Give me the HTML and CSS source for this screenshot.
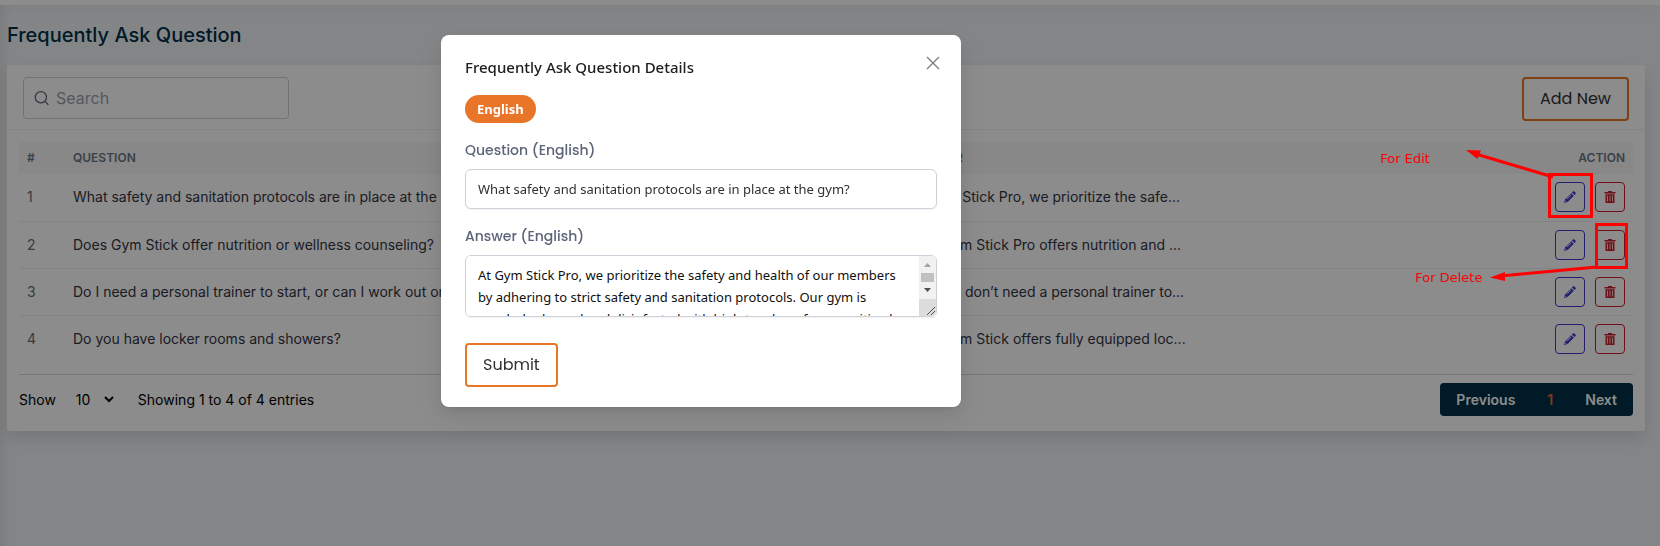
FILE: index.html
```html
<!DOCTYPE html>
<html lang="en">
<head>
  <meta charset="UTF-8">
  <meta name="viewport" content="width=device-width, initial-scale=1.0">
  <title>Frequently Ask Question</title>
  <link rel="stylesheet" href="styles.css">
</head>
<body>
  <!-- shared icons -->
  <svg class="sprite" aria-hidden="true">
    <symbol id="icon-pencil" viewBox="0 0 12 12">
      <path fill-rule="evenodd" d="M8.800.6a1.200 1.200 0 0 1 1.700 0l.9.9a1.200 1.200 0 0 1 0 1.700l-.9.9-2.600-2.600zM7.200 2.200l2.600 2.600L3.600 11 0 12l1-3.600zM6.800 3.600L2.600 7.800l.5.5 4.200-4.200zM1.500 9.400l-.4 1.500 1.500-.4z"/>
    </symbol>
    <symbol id="icon-trash" viewBox="0 0 12 12">
      <path fill-rule="evenodd" d="M4 0h4v1h3.500v1.500H.5V1H4zM1.500 3.200h9V12h-9zM3.200 4.500v6h.8v-6zM5.600 4.500v6h.8v-6zM8 4.500v6h.8v-6z"/>
    </symbol>
  </svg>

  <div class="topbar"></div>

  <main class="page">
    <h1 class="page-title">Frequently Ask Question</h1>

    <section class="card">
      <div class="card-header">
        <label class="search">
          <svg class="search-icon" viewBox="0 0 24 24" aria-hidden="true"><circle cx="11" cy="10" r="9"/><path d="M18 17l5 5"/></svg>
          <input type="search" placeholder="Search" aria-label="Search">
        </label>
        <button type="button" class="btn">Add New</button>
      </div>

      <div class="card-body">
        <table class="faq-table">
          <thead>
            <tr>
              <th class="col-id">#</th>
              <th class="col-question">Question</th>
              <th class="col-answer">Answer</th>
              <th class="col-action">Action</th>
            </tr>
          </thead>
          <tbody>
            <tr>
              <td class="row-id">1</td>
              <td>What safety and sanitation protocols are in place at the gym?</td>
              <td>At Gym Stick Pro, we prioritize the safe...</td>
              <td>
                <div class="actions">
                  <button type="button" class="icon-btn edit" aria-label="Edit"><svg><use href="#icon-pencil"/></svg></button>
                  <button type="button" class="icon-btn delete" aria-label="Delete"><svg><use href="#icon-trash"/></svg></button>
                </div>
              </td>
            </tr>
            <tr>
              <td class="row-id">2</td>
              <td>Does Gym Stick offer nutrition or wellness counseling?</td>
              <td>Yes, Gym Stick Pro offers nutrition and ...</td>
              <td>
                <div class="actions">
                  <button type="button" class="icon-btn edit" aria-label="Edit"><svg><use href="#icon-pencil"/></svg></button>
                  <button type="button" class="icon-btn delete" aria-label="Delete"><svg><use href="#icon-trash"/></svg></button>
                </div>
              </td>
            </tr>
            <tr>
              <td class="row-id">3</td>
              <td>Do I need a personal trainer to start, or can I work out on my own?</td>
              <td>No, you don’t need a personal trainer to...</td>
              <td>
                <div class="actions">
                  <button type="button" class="icon-btn edit" aria-label="Edit"><svg><use href="#icon-pencil"/></svg></button>
                  <button type="button" class="icon-btn delete" aria-label="Delete"><svg><use href="#icon-trash"/></svg></button>
                </div>
              </td>
            </tr>
            <tr>
              <td class="row-id">4</td>
              <td>Do you have locker rooms and showers?</td>
              <td>Yes, Gym Stick offers fully equipped loc...</td>
              <td>
                <div class="actions">
                  <button type="button" class="icon-btn edit" aria-label="Edit"><svg><use href="#icon-pencil"/></svg></button>
                  <button type="button" class="icon-btn delete" aria-label="Delete"><svg><use href="#icon-trash"/></svg></button>
                </div>
              </td>
            </tr>
          </tbody>
        </table>

        <div class="table-footer">
          <label for="page-size">Show</label>
          <span class="page-size">
            <select id="page-size">
              <option>10</option>
              <option>25</option>
              <option>50</option>
            </select>
            <svg viewBox="0 0 10 7" aria-hidden="true"><path d="M1 1l4 4 4-4"/></svg>
          </span>
          <span>Showing 1 to 4 of 4 entries</span>
          <nav class="pagination">
            <a href="#">Previous</a>
            <a href="#" class="current">1</a>
            <a href="#">Next</a>
          </nav>
        </div>
      </div>
    </section>
  </main>

  <div class="backdrop">
    <div class="modal" role="dialog" aria-modal="true" aria-labelledby="modal-title">
      <button type="button" class="modal-close" aria-label="Close">
        <svg viewBox="0 0 14 14"><path d="M1 1l12 12M13 1L1 13"/></svg>
      </button>
      <h2 class="modal-title" id="modal-title">Frequently Ask Question Details</h2>
      <button type="button" class="lang-tab">English</button>
      <form class="modal-form">
        <div class="field">
          <label for="question">Question (English)</label>
          <input type="text" id="question" value="What safety and sanitation protocols are in place at the gym?">
        </div>
        <div class="field">
          <label for="answer">Answer (English)</label>
          <div class="textarea-wrap">
            <textarea id="answer">At Gym Stick Pro, we prioritize the safety and health of our members by adhering to strict safety and sanitation protocols. Our gym is regularly cleaned and disinfected with high-touch surfaces sanitized throughout the day.</textarea>
            <svg class="scrollbar" viewBox="0 0 17 60" aria-hidden="true">
              <path fill="#f1f1f1" d="M0 0h17v60H0z"/>
              <path fill="#a3a3a3" d="M5 11l3.500-4 3.500 4z"/>
              <path fill="#c1c1c1" d="M2 17h13v9H2z"/>
              <path fill="#505050" d="M5 32h7l-3.500 4z"/>
              <path fill="#dcdcdc" d="M0 43h17v17H0z"/>
              <path fill="none" stroke="#505050" d="M8 59l8-8M12 59l4-4"/>
            </svg>
          </div>
        </div>
        <button type="button" class="btn">Submit</button>
      </form>
    </div>
  </div>

  <!-- callouts over the action buttons -->
  <svg class="callouts" width="290" height="300" viewBox="0 0 290 300">
    <text x="10" y="163">For Edit</text>
    <text x="45" y="282">For Delete</text>
    <rect x="179.500" y="174.500" width="42" height="42"/>
    <rect x="226.500" y="224.500" width="30" height="43"/>
    <path class="line" d="M183 177L106 154M227 267L130 276"/>
    <path class="head" d="M96 150l15 .5-3.500 8.500zM120 277.500l15-5.500v9z"/>
  </svg>
</body>
</html>
```
FILE: styles.css
```css
* {
  margin: 0;
  padding: 0;
  box-sizing: border-box;
}

body {
  font-family: Inter, 'Liberation Sans', sans-serif;
  font-size: 14px;
  line-height: 20px;
  color: #000000;
  background: #f1f3f6;
  min-height: 100vh;
}

button,
input,
select,
textarea {
  font: inherit;
  color: inherit;
}

button {
  cursor: pointer;
}

a {
  color: inherit;
  text-decoration: none;
}

.sprite {
  display: none;
}

.topbar {
  height: 5px;
  background: #ffffff;
  box-shadow: 0 4px 16px rgba(0, 0, 0, 0.1);
}

.page {
  min-height: calc(100vh - 5px);
  padding: 16px 15px 16px 7px;
  box-shadow: inset 10px 0 12px -8px rgba(0, 0, 0, 0.1);
}

.page-title {
  color: #003049;
  font-size: 20px;
  font-weight: 500;
  line-height: 28px;
  margin-bottom: 16px;
}

.card {
  background: #ffffff;
  border-radius: 2px;
  box-shadow: 0 8px 16px rgba(40, 50, 70, 0.14);
}

.card-header {
  display: flex;
  align-items: flex-start;
  justify-content: space-between;
  padding: 12px 16px 8px;
  border-bottom: 1px solid #eceef3;
}

.search {
  display: flex;
  align-items: center;
  gap: 7px;
  width: 266px;
  height: 42px;
  padding: 0 10px;
  border: 1px solid #d0d0da;
  border-radius: 4px;
}

.search-icon {
  width: 15px;
  height: 15px;
  fill: none;
  stroke: #5d6470;
  stroke-width: 2;
}

.search input {
  flex: 1;
  min-width: 0;
  border: none;
  outline: none;
  background: none;
  font-size: 16px;
}

.search input::placeholder {
  color: #9a9fac;
}

.btn {
  height: 44px;
  padding: 0 16px;
  background: #ffffff;
  color: #303030;
  border: 2px solid #e87528;
  border-radius: 4px;
  font-family: Poppins, Inter, sans-serif;
  font-size: 16px;
}

.card-body {
  padding: 12px;
}

.faq-table {
  width: 100%;
  border-collapse: collapse;
  table-layout: fixed;
}

.faq-table th {
  height: 32px;
  padding: 0 8px;
  background: #f8f8f8;
  color: #6b7785;
  font-size: 12px;
  font-weight: 600;
  text-align: left;
  text-transform: uppercase;
}

.faq-table td {
  height: 47px;
  padding: 0 8px;
  border-bottom: 1px solid #eceef3;
  color: #34343f;
  white-space: nowrap;
}

.faq-table tr:last-child td {
  border-bottom: none;
}

.faq-table .row-id {
  color: #6c6c72;
}

.col-id {
  width: 46px;
}

.col-question {
  width: 51.85%;
}

.faq-table .col-action {
  width: 120px;
  text-align: right;
}

.actions {
  display: flex;
  justify-content: flex-end;
  gap: 10px;
}

.icon-btn {
  display: grid;
  place-items: center;
  width: 30px;
  height: 30px;
  background: none;
  border: 1px solid;
  border-radius: 4px;
}

.icon-btn svg {
  width: 12px;
  height: 12px;
  fill: currentColor;
}

.icon-btn.edit {
  color: #4338ca;
}

.icon-btn.delete {
  color: #c81e2a;
}

.table-footer {
  display: flex;
  align-items: center;
  margin-top: 12px;
  padding: 8px 0 3px;
  border-top: 1px solid #d9d9de;
}

.page-size {
  display: grid;
  align-items: center;
  margin: 0 24px 0 20px;
}

.page-size select,
.page-size svg {
  grid-area: 1 / 1;
}

.page-size select {
  width: 38px;
  background: none;
  border: none;
  appearance: none;
}

.page-size svg {
  justify-self: end;
  width: 10px;
  height: 7px;
  fill: none;
  stroke: #000000;
  stroke-width: 2;
  pointer-events: none;
}

.pagination {
  display: flex;
  align-items: center;
  gap: 32px;
  height: 33px;
  margin-left: auto;
  padding: 0 16px;
  background: #003049;
  border-radius: 4px;
  color: #ffffff;
  font-weight: 600;
}

.pagination .current {
  color: #e8672e;
}

.backdrop {
  position: fixed;
  inset: 0;
  display: flex;
  align-items: flex-start;
  justify-content: center;
  padding: 35px 258px 0 0;
  background: rgba(0, 0, 0, 0.45);
}

.modal {
  position: relative;
  width: 520px;
  padding: 20px 24px;
  background: #ffffff;
  border-radius: 8px;
  box-shadow:
    0 6px 16px rgba(0, 0, 0, 0.08),
    0 3px 6px -4px rgba(0, 0, 0, 0.12),
    0 9px 28px 8px rgba(0, 0, 0, 0.05);
  font-family: 'Noto Sans', 'Open Sans', sans-serif;
}

.modal-close {
  position: absolute;
  top: 16px;
  right: 16px;
  display: grid;
  place-items: center;
  width: 24px;
  height: 24px;
  background: none;
  border: none;
}

.modal-close svg {
  width: 14px;
  height: 14px;
  fill: none;
  stroke: #808080;
  stroke-width: 1.400;
}

.modal-title {
  color: #202020;
  font-size: 15px;
  font-weight: 500;
  line-height: 24px;
  margin-bottom: 16px;
}

.lang-tab {
  display: block;
  height: 28px;
  padding: 0 12px;
  background: #e87528;
  border: none;
  border-radius: 14px;
  color: #ffffff;
  font-size: 13px;
  font-weight: 700;
  margin-bottom: 16px;
}

.field {
  margin-bottom: 16px;
}

.field label {
  display: block;
  margin-bottom: 8px;
  color: #5b6478;
  font-family: Poppins, Inter, sans-serif;
  font-size: 14px;
  font-weight: 500;
  line-height: 22px;
}

.field input,
.field textarea {
  display: block;
  width: 100%;
  padding: 8px 12px;
  border: 1px solid #d0d0da;
  border-radius: 6px;
  box-shadow: 0 1px 2px rgba(0, 0, 0, 0.06);
  outline: none;
  color: #303030;
  font-size: 13px;
  line-height: 22px;
}

.field input {
  height: 40px;
}

.textarea-wrap {
  position: relative;
}

.field textarea {
  height: 62px;
  padding-right: 30px;
  color: #101010;
  resize: none;
}

.scrollbar {
  position: absolute;
  top: 1px;
  right: 1px;
  width: 17px;
  height: 60px;
  border-radius: 0 5px 5px 0;
}

.modal-form .btn {
  margin-top: 10px;
}

.callouts {
  position: absolute;
  top: 0;
  right: 0;
  fill: none;
  stroke: #ff0000;
  stroke-width: 3;
  pointer-events: none;
}

.callouts text,
.callouts .head {
  fill: #ff0000;
  stroke: none;
}

.callouts text {
  font-family: 'DejaVu Sans', sans-serif;
  font-size: 13px;
}
```
